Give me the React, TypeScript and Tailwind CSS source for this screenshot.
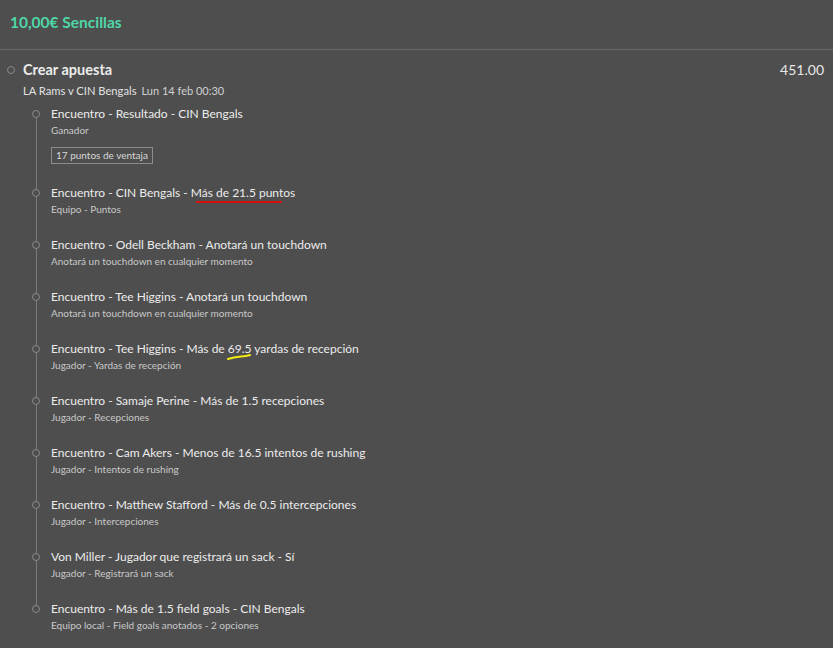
import React from "react";

interface Leg {
  title: React.ReactNode;
  detail: string;
  badge?: string;
}

const legs: Leg[] = [
  {
    title: "Encuentro - Resultado - CIN Bengals",
    detail: "Ganador",
    badge: "17 puntos de ventaja",
  },
  {
    title: (
      <>
        Encuentro - CIN Bengals -{" "}
        <span className="relative">
          Más de 21.5 puntos
          <span className="absolute left-[5px] right-[13px] top-[16px] h-[2px] bg-[#d60f0f]" />
        </span>
      </>
    ),
    detail: "Equipo - Puntos",
  },
  {
    title: "Encuentro - Odell Beckham - Anotará un touchdown",
    detail: "Anotará un touchdown en cualquier momento",
  },
  {
    title: "Encuentro - Tee Higgins - Anotará un touchdown",
    detail: "Anotará un touchdown en cualquier momento",
  },
  {
    title: (
      <>
        Encuentro - Tee Higgins - Más de{" "}
        <span className="relative">
          69.5
          <svg
            className="absolute left-[-1px] top-[13px]"
            width="24"
            height="6"
            viewBox="0 0 24 6"
          >
            <path
              d="M1 5 C6 3.5 10 3 14 2.6 C18 2.2 21 1.6 23 1"
              stroke="#f2ea10"
              strokeWidth="2"
              fill="none"
              strokeLinecap="round"
            />
          </svg>
        </span>{" "}
        yardas de recepción
      </>
    ),
    detail: "Jugador - Yardas de recepción",
  },
  {
    title: "Encuentro - Samaje Perine - Más de 1.5 recepciones",
    detail: "Jugador - Recepciones",
  },
  {
    title: "Encuentro - Cam Akers - Menos de 16.5 intentos de rushing",
    detail: "Jugador - Intentos de rushing",
  },
  {
    title: "Encuentro - Matthew Stafford - Más de 0.5 intercepciones",
    detail: "Jugador - Intercepciones",
  },
  {
    title: "Von Miller - Jugador que registrará un sack - Sí",
    detail: "Jugador - Registrará un sack",
  },
  {
    title: "Encuentro - Más de 1.5 field goals - CIN Bengals",
    detail: "Equipo local - Field goals anotados - 2 opciones",
  },
];

const Dot = () => (
  <div className="h-[8px] w-[8px] shrink-0 rounded-full border border-[#8a8a8a] bg-[#4e4e4e]" />
);

const LegRow: React.FC<{ leg: Leg; first: boolean; last: boolean }> = ({
  leg,
  first,
  last,
}) => {
  return (
    <div className="flex">
      <div className="flex w-[30px] shrink-0 flex-col items-center">
        <div className={`h-[5px] w-px ${first ? "" : "bg-[#7a7a7a]"}`} />
        <Dot />
        {!last && <div className="w-px flex-1 bg-[#7a7a7a]" />}
      </div>
      <div className={leg.badge ? "pb-[19px]" : last ? "pb-[12px]" : "pb-[18px]"}>
        <div className="text-[12px] leading-[17px] text-[#ececec]">{leg.title}</div>
        <div className="text-[10px] leading-[17px] text-[#c9c9c9]">{leg.detail}</div>
        {leg.badge && (
          <div className="mt-[8px] inline-block border border-[#8c8c8c] px-[4px] text-[10px] leading-[15px] text-[#d6d6d6]">
            {leg.badge}
          </div>
        )}
      </div>
    </div>
  );
};

export default function App() {
  return (
    <div
      className="min-h-[648px] w-full bg-[#4e4e4e] text-[#ececec]"
      style={{ fontFamily: "Lato, 'Open Sans', sans-serif" }}
    >
      <header className="flex h-[50px] items-center border-b border-[#686868] px-[10px] pb-[3px]">
        <h1 className="text-[15.5px] font-bold text-[#4fd6a8]">10,00€ Sencillas</h1>
      </header>

      <section className="pl-[7px] pr-[9px] pt-[10px]">
        <div className="flex items-center">
          <Dot />
          <h2 className="ml-[8px] text-[14.5px] font-bold leading-[20px]">Crear apuesta</h2>
          <span className="ml-auto text-[14px] leading-[20px] text-[#e6e6e6]">451.00</span>
        </div>
        <div className="mt-[2px] flex items-baseline pl-[16px] text-[11.2px] leading-[18px]">
          <span className="text-[#e2e2e2]">LA Rams v CIN Bengals</span>
          <span className="ml-[5px] text-[11px] text-[#d0d0d0]">Lun 14 feb 00:30</span>
        </div>

        <div className="ml-[14px] mt-[5px]">
          {legs.map((leg, i) => (
            <LegRow key={i} leg={leg} first={i === 0} last={i === legs.length - 1} />
          ))}
        </div>
      </section>
    </div>
  );
}
